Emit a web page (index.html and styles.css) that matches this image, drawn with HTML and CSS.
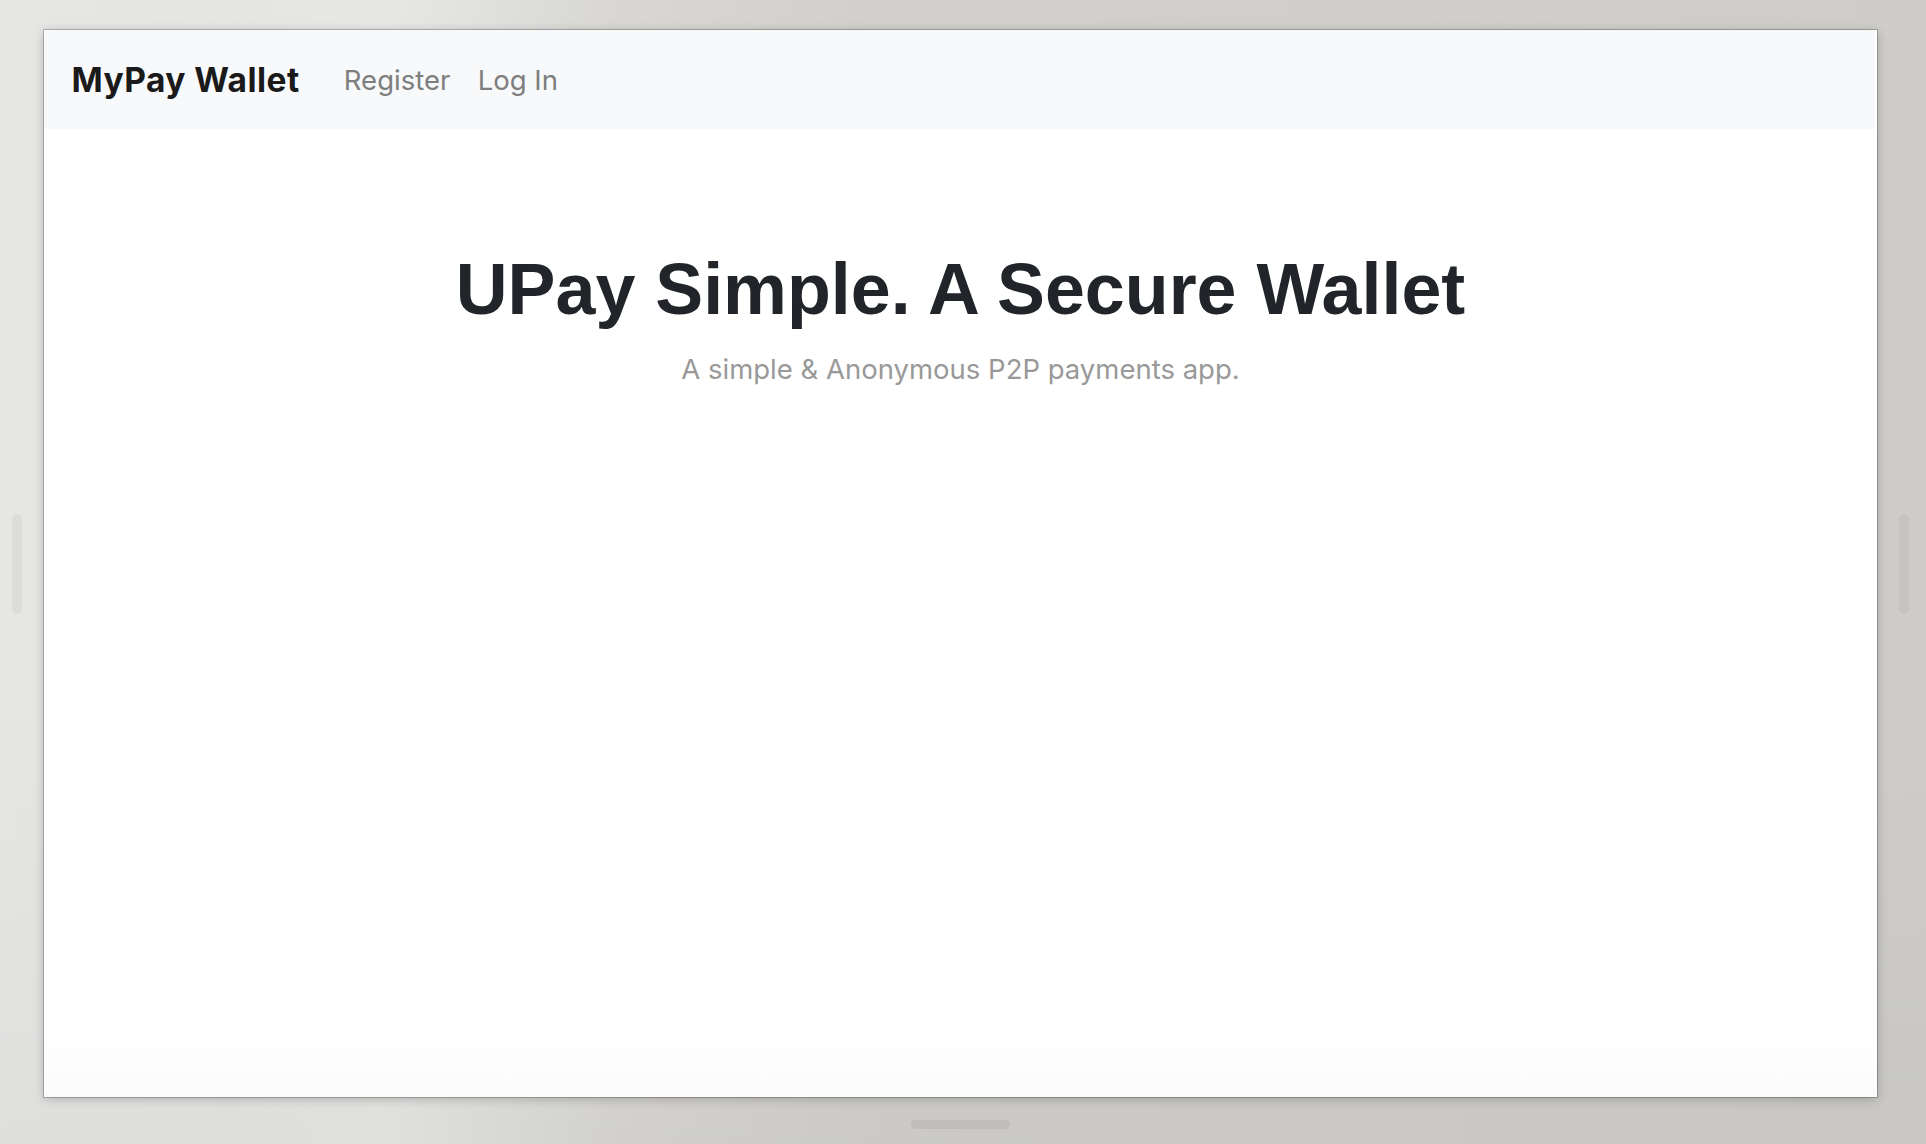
FILE: index.html
```html
<!DOCTYPE html>
<html lang="en">
<head>
<meta charset="utf-8">
<title>MyPay Wallet</title>
<link rel="stylesheet" href="styles.css">
</head>
<body>
<div class="stage">
  <div class="row">
    <div class="gutter gutter-left"><span class="handle-v"></span></div>
    <div class="panel">
      <nav class="navbar">
        <a class="brand" href="#">MyPay Wallet</a>
        <ul class="nav">
          <li><a class="nav-link" href="#">Register</a></li>
          <li><a class="nav-link" href="#">Log In</a></li>
        </ul>
      </nav>
      <main class="hero">
        <h1 class="title">UPay Simple. A Secure Wallet</h1>
        <p class="lead">A simple &amp; Anonymous P2P payments app.</p>
      </main>
    </div>
    <div class="gutter gutter-right"><span class="handle-v"></span></div>
  </div>
  <div class="bottom"><span class="handle-h"></span></div>
</div>
</body>
</html>
```

FILE: styles.css
```css
html, body {
  margin: 0;
  padding: 0;
}
body {
  width: 1926px;
  height: 1144px;
  overflow: hidden;
  background:
    linear-gradient(to bottom, rgba(0,0,0,0) 0%, rgba(0,0,0,0) 60%, rgba(0,0,0,0.03) 100%),
    linear-gradient(to right, #e6e6e5 0%, #e5e5e4 12%, #e7e7e5 20%, #d8d7d4 32%, #d1d0cd 45%, #cecdca 100%);
  font-family: Inter, "Noto Sans", sans-serif;
}
.stage {
  display: flex;
  flex-direction: column;
  padding-top: 30px;
}
.row {
  display: flex;
  align-items: center;
  height: 1067px;
}
.gutter {
  box-sizing: border-box;
  display: flex;
  align-items: center;
}
.gutter-left {
  width: 44px;
  padding-left: 12px;
}
.gutter-right {
  width: 49px;
  padding-left: 22px;
}
.handle-v {
  display: block;
  width: 10px;
  height: 100px;
  border-radius: 5px;
  background: rgba(0,0,0,0.045);
}
.panel {
  width: 1833px;
  height: 1067px;
  background: linear-gradient(to bottom, #ffffff 0%, #ffffff 94%, #fbfbfb 100%);
  box-shadow: 0 0 0 1px rgba(0,0,0,0.22), 0 2px 10px rgba(0,0,0,0.22);
  display: flex;
  flex-direction: column;
}
.navbar {
  height: 99px;
  margin-right: 2px;
  background: #f8f9fa;
  display: flex;
  align-items: center;
  padding-left: 27.5px;
  box-sizing: border-box;
}
.brand {
  font-family: Inter, "Noto Sans", sans-serif;
  font-weight: 700;
  font-size: 33.5px;
  color: #1a1a1a;
  text-decoration: none;
  margin-right: 30.5px;
  letter-spacing: 0.45px;
}
.nav {
  display: flex;
  list-style: none;
  margin: 0;
  padding: 0;
}
.nav-link {
  display: block;
  padding: 0 13.7px;
  font-size: 27.5px;
  color: #7d7e7e;
  text-decoration: none;
}
.hero {
  padding-top: 118px;
  text-align: center;
}
.title {
  margin: 0;
  font-family: "Liberation Sans", Arial, sans-serif;
  font-weight: 700;
  font-size: 71.8px;
  line-height: 1.18;
  color: #212529;
}
.lead {
  margin: 17px 0 0;
  font-family: Inter, "Noto Sans", sans-serif;
  font-size: 27.5px;
  line-height: 1.5;
  color: #999999;
}
.bottom {
  height: 47px;
  margin-left: 44px;
  width: 1833px;
  display: flex;
  justify-content: center;
  align-items: flex-start;
  padding-top: 23px;
  box-sizing: border-box;
}
.handle-h {
  display: block;
  width: 99px;
  height: 9px;
  border-radius: 5px;
  background: rgba(0,0,0,0.06);
}
```
